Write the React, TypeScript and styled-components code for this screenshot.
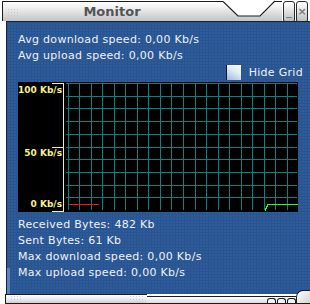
import styled, { createGlobalStyle } from "styled-components";

const GlobalStyle = createGlobalStyle`
  html, body { margin: 0; padding: 0; background: #ffffff; }
  body { font-family: "DejaVu Sans", Verdana, sans-serif; }
`;

const Frame = styled.div`
  width: 310px;
  height: 304px;
  display: flex;
  flex-direction: column;
`;

const TitleBar = styled.div`
  display: flex;
  margin: 1px 2px 0 2px;
  height: 20px;
`;

const TitleMain = styled.div`
  flex: 1;
  display: flex;
  align-items: center;
  border-top: 1px solid #1c1c1c;
  border-left: 1px solid #1c1c1c;
  background: linear-gradient(#ffffff, #f0f0f0 30%, #c4c4c4);
`;

const Grip = styled.div<{ $w: number }>`
  width: ${(p) => p.$w}px;
  height: 8px;
  margin: 0 4px;
  background-image: radial-gradient(circle, #c8c8c8 0.8px, transparent 1px);
  background-size: 3px 3px;
  opacity: 0.9;
`;

const Title = styled.div`
  flex: 1;
  text-align: center;
  padding-right: 22px;
  font-weight: bold;
  font-size: 13px;
  color: #555555;
  line-height: 16px;
`;

const Notch = styled.svg`
  display: block;
  flex: none;
  margin-top: -1px;
`;

const TitleTail = styled.div`
  width: 7px;
  border-top: 1px solid #1c1c1c;
  background: linear-gradient(#ffffff, #f0f0f0 30%, #c4c4c4);
`;

const WinButton = styled.div`
  width: 10px;
  margin-left: 1px;
  height: 19px;
  border: 1px solid #2a2a2a;
  border-radius: 3px 3px 2px 2px;
  background: linear-gradient(#ffffff, #e8e8e8 40%, #bdbdbd);
  display: flex;
  align-items: center;
  justify-content: center;
  font-size: 11px;
  font-weight: bold;
  color: #7a7a7a;
  line-height: 1;
`;

const Body = styled.div`
  margin-left: 6px;
  width: 297px;
  height: 258px;
  border: 1px solid #15243a;
  border-bottom: none;
  padding: 10px 0 10px 11px;
  background-color: #2e5c9b;
  background-image: linear-gradient(#5b84bd, #5b84bd),
    linear-gradient(#5b84bd, #5b84bd),
    linear-gradient(#2a548f 1px, transparent 1px),
    linear-gradient(90deg, #2a548f 1px, transparent 1px);
  background-size: 3px 26px, 3px 62px, 3px 3px, 3px 3px;
  background-position: left bottom, right bottom, 0 0, 0 0;
  background-repeat: no-repeat, no-repeat, repeat, repeat;
  color: #edf1f7;
  font-size: 11px;
  letter-spacing: 0.3px;
`;

const Line = styled.div<{ $gap?: number }>`
  height: 16px;
  line-height: 16px;
  margin-top: ${(p) => p.$gap ?? 0}px;
  white-space: nowrap;
`;

const OptionRow = styled.div`
  display: flex;
  align-items: center;
  justify-content: flex-end;
  gap: 8px;
  height: 16px;
  padding-right: 12px;
`;

const CheckBox = styled.div`
  width: 14px;
  height: 15px;
  border-left: 1px solid #101828;
  background: linear-gradient(30deg, #9db7dc, #dfe9f6 55%, #ffffff);
`;

const Chart = styled.div`
  margin-top: 2px;
  width: 280px;
  height: 129px;
  padding-top: 1px;
  background: #000000;
  display: flex;
`;

const Scale = styled.div`
  position: relative;
  width: 45px;
  border-right: 1px solid #f4f08a;
  display: flex;
  flex-direction: column;

  &::before,
  &::after {
    content: "";
    position: absolute;
    right: 0;
    width: 11px;
    height: 1px;
    background: #f4f08a;
  }
  &::before { top: 0; }
  &::after { bottom: 0; }
`;

const ScaleLabel = styled.div<{ $tick?: boolean; $push?: number }>`
  position: relative;
  height: 12px;
  line-height: 12px;
  margin-top: ${(p) => p.$push ?? 0}px;
  padding-right: 1px;
  text-align: right;
  font-size: 9px;
  font-weight: bold;
  letter-spacing: 0;
  color: #f4f08a;
  ${(p) =>
    p.$tick &&
    `&::before {
      content: "";
      position: absolute;
      top: 0;
      right: 0;
      width: 11px;
      height: 1px;
      background: #f4f08a;
    }`}
`;

const GridSvg = styled.svg`
  display: block;
  margin-left: 2px;
`;

const BottomBar = styled.div`
  display: flex;
  margin-left: 5px;
  height: 10px;
  align-items: flex-end;
`;

const BottomLeft = styled.div`
  width: 141px;
  height: 8px;
  border: 1px solid #1c1c1c;
  border-right: none;
  background: linear-gradient(#ffffff, #ececec 50%, #cfcfcf);
  display: flex;
  align-items: center;
  justify-content: space-between;
`;

const BottomMid = styled.div`
  flex: 1;
  height: 6px;
  border-top: 1px solid #1c1c1c;
  border-bottom: 1px solid #1c1c1c;
  background: linear-gradient(#ffffff, #dcdcdc);
  display: flex;
  justify-content: flex-end;
  align-items: flex-end;
`;

const Bump = styled.div`
  width: 7px;
  height: 4px;
  border: 1px solid #1c1c1c;
  border-bottom: none;
  border-radius: 3px 3px 0 0;
  margin-left: 1px;
  background: #f4f4f4;
`;

const Corner = styled.div`
  width: 13px;
  height: 12px;
  border: 1px solid #1c1c1c;
  border-right: none;
  border-radius: 7px 0 0 0;
  background: linear-gradient(135deg, #ffffff, #d4d4d4);
`;

const cols = Array.from({ length: 20 }, (_, i) => Math.round(1.5 + 11.55 * i) + 0.5);
const rows = Array.from({ length: 10 }, (_, j) => Math.round(12.7 * j) + 0.5);

const Grid = () => (
  <GridSvg width={232} height={129} shapeRendering="crispEdges">
    {rows.map((y) => (
      <line key={"h" + y} x1={0} y1={y} x2={231} y2={y} stroke="#0b8282" />
    ))}
    {cols.map((x) => (
      <line key={"v" + x} x1={x} y1={0} x2={x} y2={127} stroke="#0b8282" />
    ))}
    <line x1={3} y1={121.5} x2={33} y2={121.5} stroke="#ff1010" />
    <polyline
      points="199,127.5 202,121.5 232,121.5"
      fill="none"
      stroke="#22ff22"
    />
  </GridSvg>
);

const App = () => (
  <Frame>
    <GlobalStyle />
    <TitleBar>
      <TitleMain>
        <Grip $w={12} />
        <Title>Monitor</Title>
      </TitleMain>
      <Notch width={52} height={21} viewBox="0 0 52 21">
        <defs>
          <linearGradient id="tb" x1="0" y1="0" x2="0" y2="1">
            <stop offset="0" stopColor="#ffffff" />
            <stop offset="0.3" stopColor="#f0f0f0" />
            <stop offset="1" stopColor="#c4c4c4" />
          </linearGradient>
        </defs>
        <rect x={0} y={1} width={52} height={20} fill="url(#tb)" />
        <polygon points="0,0 52,0 52,1 37,16 15,16 0,1.5" fill="#ffffff" />
        <polyline points="0,1.5 15,16 37,16 52,1" fill="none" stroke="#1c1c1c" strokeWidth={1.2} />
      </Notch>
      <TitleTail />
      <WinButton>_</WinButton>
      <WinButton>×</WinButton>
    </TitleBar>
    <Body>
      <Line>Avg download speed: 0,00 Kb/s</Line>
      <Line>Avg upload speed: 0,00 Kb/s</Line>
      <OptionRow>
        <CheckBox />
        <span>Hide Grid</span>
      </OptionRow>
      <Chart>
        <Scale>
          <ScaleLabel $push={1}>100 Kb/s</ScaleLabel>
          <ScaleLabel $tick $push={51}>50 Kb/s</ScaleLabel>
          <ScaleLabel $push={39}>0 Kb/s</ScaleLabel>
        </Scale>
        <Grid />
      </Chart>
      <Line $gap={5}>Received Bytes: 482 Kb</Line>
      <Line>Sent Bytes: 61 Kb</Line>
      <Line>Max download speed: 0,00 Kb/s</Line>
      <Line>Max upload speed: 0,00 Kb/s</Line>
    </Body>
    <BottomBar>
      <BottomLeft>
        <Grip $w={12} />
        <Grip $w={14} />
      </BottomLeft>
      <BottomMid>
        <Bump />
        <Bump />
        <Bump />
      </BottomMid>
      <Corner />
    </BottomBar>
  </Frame>
);

export default App;
